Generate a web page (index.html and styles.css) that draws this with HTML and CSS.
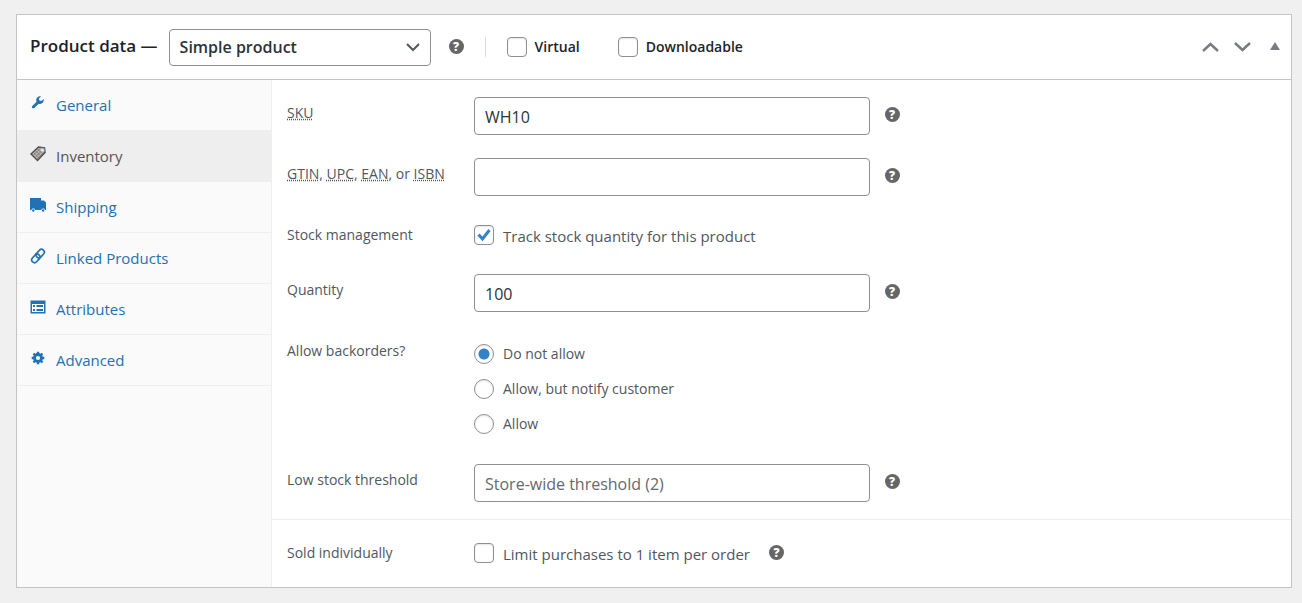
FILE: index.html
```html
<!DOCTYPE html>
<html lang="en">
<head>
  <meta charset="UTF-8" />
  <meta name="viewport" content="width=device-width, initial-scale=1.0" />
  <title>Product data</title>
  <link rel="stylesheet" href="styles.css">
</head>
<body>
  <div class="postbox">
    <div class="postbox-header">
      <h2 class="title"><label for="product-type">Product data —</label></h2>
      <select id="product-type" class="type-select">
        <option>Simple product</option>
        <option>Grouped product</option>
        <option>External/Affiliate product</option>
        <option>Variable product</option>
      </select>
      <span class="help-tip">?</span>
      <div class="type-options">
        <label class="type-option"><input type="checkbox"> Virtual</label>
        <label class="type-option"><input type="checkbox"> Downloadable</label>
      </div>
      <div class="handle-actions">
        <button type="button" class="handle" aria-label="Move up">
          <svg width="17" height="10" viewBox="0 0 17 10"><path d="M1 9 L8.500 2 L16 9" /></svg>
        </button>
        <button type="button" class="handle" aria-label="Move down">
          <svg width="17" height="10" viewBox="0 0 17 10"><path d="M1 1 L8.500 8 L16 1" /></svg>
        </button>
        <button type="button" class="handle handle-toggle" aria-label="Toggle panel">
          <svg width="10" height="8" viewBox="0 0 10 8"><path d="M5 0 L10 8 H0 Z" /></svg>
        </button>
      </div>
    </div>

    <div class="panel-wrap">
      <ul class="tabs">
        <li>
          <a href="#general">
            <svg class="icon" viewBox="0 0 20 20"><path d="M16.700 9.800c-1.600 1.600-4 2-5.800 1.100L4.800 17c-.8.800-2.200.8-3 0s-.8-2 0-2.800l6.200-6.100C7 6.300 7.300 3.700 9 2.100c1.400-1.400 3.400-1.900 5.200-1.400L11.300 3.600l.6 3 3 .6 3-3c.5 1.900.1 4.100-1.200 5.600z" /></svg>
            General
          </a>
        </li>
        <li class="active">
          <a href="#inventory">
            <svg class="icon icon-wide icon-tag" viewBox="0 0 16 16">
              <path class="tag-body" d="M1 8 L8.500 1 L14.500 2 L15 6.500 L7.500 14.500 Z" />
              <path class="tag-lines" d="M3.500 6.500 L9.500 12 M5.500 4.700 L11.300 10.300 M7.500 3 L13 8.500 M3 9.500 L10 2.800 M5 11.500 L12 4.500 M7 13.200 L14 6" />
              <path class="tag-shine" d="M11 2.200 L14 2.500 L14.300 5.500" />
              <circle class="tag-hole" cx="12.300" cy="4.300" r="1.200" />
            </svg>
            Inventory
          </a>
        </li>
        <li>
          <a href="#shipping">
            <svg class="icon icon-wide" viewBox="0 0 16 16"><path d="M0 1h11v2.500h3L16 5.500V13h-1a2 2 0 0 0-3.800 0H5.200a2 2 0 0 0-3.800 0H0z" /><circle cx="3.300" cy="13.500" r="1.200" /><circle cx="13.100" cy="13.500" r="1.200" /></svg>
            Shipping
          </a>
        </li>
        <li>
          <a href="#linked">
            <svg class="icon icon-wide icon-link" viewBox="0 0 16 16"><g transform="rotate(-48 8 8)"><rect x="0" y="5.200" width="9.500" height="5.600" rx="2.800" /><rect x="6.500" y="5.200" width="9.500" height="5.600" rx="2.800" /></g></svg>
            Linked Products
          </a>
        </li>
        <li>
          <a href="#attributes">
            <svg class="icon icon-wide" viewBox="0 0 16 16"><path fill-rule="evenodd" d="M0.500 1.500h15v13H0.500zM2 5v8h12V5zM3 6h2v2H3zM6.500 6H13v2H6.500zM3 10h2v2H3zM6.500 10H13v2H6.500z" /></svg>
            Attributes
          </a>
        </li>
        <li>
          <a href="#advanced">
            <svg class="icon icon-gear" viewBox="0 0 20 20"><circle cx="10" cy="10" r="5" /><path d="M10 1v4M10 15v4M1 10h4M15 10h4M3.600 3.600l2.900 2.900M13.500 13.500l2.900 2.900M3.600 16.400l2.900-2.900M13.500 6.500l2.900-2.900" /></svg>
            Advanced
          </a>
        </li>
      </ul>

      <div class="panel">
        <div class="options-group">
          <div class="form-field">
            <label class="field-label" for="sku"><abbr title="Stock Keeping Unit">SKU</abbr></label>
            <input type="text" id="sku" class="text-input" value="WH10">
            <span class="help-tip">?</span>
          </div>
          <div class="form-field">
            <label class="field-label" for="gtin"><abbr title="Global Trade Item Number">GTIN</abbr>, <abbr title="Universal Product Code">UPC</abbr>, <abbr title="European Article Number">EAN</abbr>, or <abbr title="International Standard Book Number">ISBN</abbr></label>
            <input type="text" id="gtin" class="text-input">
            <span class="help-tip">?</span>
          </div>
          <div class="form-field check-field">
            <label class="field-label" for="manage-stock">Stock management</label>
            <input type="checkbox" id="manage-stock" checked>
            <label class="description" for="manage-stock">Track stock quantity for this product</label>
          </div>
          <div class="form-field">
            <label class="field-label" for="stock">Quantity</label>
            <input type="text" id="stock" class="text-input" value="100">
            <span class="help-tip">?</span>
          </div>
          <div class="form-field" role="radiogroup" aria-labelledby="backorders">
            <span class="field-label" id="backorders">Allow backorders?</span>
            <ul class="radios">
              <li><label><input type="radio" name="backorders" checked> Do not allow</label></li>
              <li><label><input type="radio" name="backorders"> Allow, but notify customer</label></li>
              <li><label><input type="radio" name="backorders"> Allow</label></li>
            </ul>
          </div>
          <div class="form-field">
            <label class="field-label" for="low-stock">Low stock threshold</label>
            <input type="text" id="low-stock" class="text-input" placeholder="Store-wide threshold (2)">
            <span class="help-tip">?</span>
          </div>
        </div>

        <div class="options-group">
          <div class="form-field check-field">
            <label class="field-label" for="sold-individually">Sold individually</label>
            <input type="checkbox" id="sold-individually">
            <label class="description" for="sold-individually">Limit purchases to 1 item per order</label>
            <span class="help-tip">?</span>
          </div>
        </div>
      </div>
    </div>
  </div>
</body>
</html>
```
FILE: styles.css
```css
* {
  box-sizing: border-box;
}
body {
  margin: 0;
  padding: 14px 10px 15px 16px;
  background-color: #f0f0f1;
  color: #50575e;
  font-family: 'Segoe UI', 'Open Sans', sans-serif;
  font-size: 14px;
  line-height: 24px;
}
ul {
  list-style: none;
  margin: 0;
  padding: 0;
}
.postbox {
  background-color: #fff;
  border: 1px solid #c3c4c7;
}

/* header */
.postbox-header {
  display: flex;
  align-items: center;
  height: 65px;
  padding: 0 11px 0 13px;
  border-bottom: 1px solid #c3c4c7;
  color: #1d2327;
}
.title {
  margin: 0 11px 2px 0;
  font-size: 17px;
  font-weight: 600;
  white-space: nowrap;
}
.type-select {
  width: 262px;
  height: 37px;
  padding: 0 30px 0 10px;
  appearance: none;
  border: 1px solid #8c8f94;
  border-radius: 4px;
  background: #fff url('data:image/svg+xml;utf8,<svg xmlns="http://www.w3.org/2000/svg" width="14" height="9"><path d="M1 1l6 6 6-6" fill="none" stroke="%2350575e" stroke-width="2"/></svg>') no-repeat right 10px center;
  color: #2c3338;
  font-family: inherit;
  font-size: 16px;
  font-weight: 600;
}
.help-tip {
  flex: none;
  width: 15px;
  height: 15px;
  border-radius: 50%;
  background-color: #666;
  color: #fff;
  font-size: 12px;
  font-weight: 800;
  line-height: 15px;
  text-align: center;
  cursor: help;
}
.postbox-header .help-tip {
  margin: 0 21px 2px 18px;
}
.type-options {
  display: flex;
  align-items: center;
  gap: 38px;
  height: 20px;
  padding-left: 21px;
  border-left: 1px solid #dcdcde;
}
.type-option {
  display: flex;
  align-items: center;
  gap: 8px;
  font-weight: 600;
}
.handle-actions {
  display: flex;
  align-items: center;
  gap: 15px;
  margin-left: auto;
}
.handle {
  display: flex;
  padding: 0;
  border: 0;
  background: none;
  cursor: pointer;
}
.handle path {
  fill: none;
  stroke: #787c82;
  stroke-width: 2.5;
}
.handle-toggle {
  margin: 0 0 3px 4px;
}
.handle-toggle path {
  fill: #787c82;
  stroke: none;
}

/* tabs */
.panel-wrap {
  display: flex;
}
.tabs {
  flex: none;
  width: 255px;
  background-color: #fafafa;
  border-right: 1px solid #eee;
}
.tabs a {
  display: flex;
  align-items: center;
  gap: 10px;
  height: 51px;
  padding: 0 13px;
  border-bottom: 1px solid #eee;
  color: #2271b1;
  font-size: 15px;
  text-decoration: none;
}
.tabs .active a {
  background-color: #eee;
  color: #555;
}
.icon {
  width: 16px;
  height: 16px;
  margin-bottom: 4px;
  padding: 1px;
  fill: currentColor;
}
.icon-wide {
  padding: 0;
}
.icon-link rect {
  fill: none;
  stroke: currentColor;
  stroke-width: 1.7;
}
.icon-gear circle {
  fill: none;
  stroke: currentColor;
  stroke-width: 4;
}
.icon-gear path {
  stroke: currentColor;
  stroke-width: 3.4;
}
.icon-tag .tag-body {
  fill: #c4b8ae;
  stroke: #4a4f57;
  stroke-width: 1.5;
}
.icon-tag .tag-lines {
  stroke: #77706c;
  stroke-width: 0.8;
}
.icon-tag .tag-shine {
  fill: none;
  stroke: #9fb8cf;
  stroke-width: 1;
}
.icon-tag .tag-hole {
  fill: #eee;
}

/* fields */
.panel {
  flex: 1;
}
.options-group {
  display: flex;
  flex-direction: column;
  gap: 23px;
  padding: 17px 15px;
}
.options-group + .options-group {
  padding-bottom: 18px;
  border-top: 1px solid #eee;
}
.form-field {
  display: flex;
  align-items: flex-start;
}
.field-label {
  flex: none;
  width: 187px;
  padding-top: 4px;
}
abbr {
  text-decoration: underline dotted;
}
.text-input {
  width: 40%;
  height: 38px;
  padding: 2px 10px 0;
  border: 1px solid #8c8f94;
  border-radius: 4px;
  background-color: #fff;
  color: #2c3338;
  font-family: inherit;
  font-size: 16px;
}
.text-input::placeholder {
  color: #646970;
}
.form-field .help-tip {
  margin: 10px 0 0 15px;
}

input[type=checkbox],
input[type=radio] {
  flex: none;
  width: 20px;
  height: 20px;
  margin: 0;
  appearance: none;
  border: 1px solid #8c8f94;
  border-radius: 4px;
  background: #fff no-repeat center;
  box-shadow: inset 0 1px 2px rgba(0, 0, 0, 0.1);
}
input[type=radio] {
  border-radius: 50%;
}
input[type=checkbox]:checked {
  background-image: url('data:image/svg+xml;utf8,<svg xmlns="http://www.w3.org/2000/svg" width="16" height="16"><path d="M2.500 7.500L6.500 12L13.500 3" fill="none" stroke="%233582c4" stroke-width="3"/></svg>');
}
input[type=radio]:checked {
  background-image: radial-gradient(circle, #3582c4 5px, transparent 6px);
}

.form-field.check-field {
  height: 32px;
}
.check-field input[type=checkbox] {
  margin-top: 6px;
}
.check-field .description {
  margin-left: 9px;
  padding-top: 5px;
  font-size: 15px;
}
.check-field .help-tip {
  margin: 8px 0 0 19px;
}
.radios {
  padding-top: 1px;
}
.radios label {
  display: flex;
  align-items: center;
  gap: 9px;
  height: 35px;
}
```
